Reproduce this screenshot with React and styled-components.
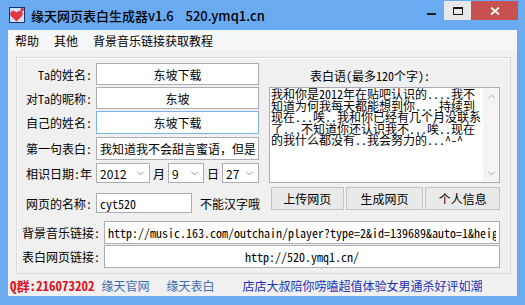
import React from "react";
import styled, { createGlobalStyle } from "styled-components";
import { ChevronDown, ChevronUp } from "lucide-react";

const SANS = `"Noto Sans CJK SC", "Noto Sans", sans-serif`;
const SONG = `"Noto Sans Mono CJK SC", "Noto Sans CJK SC", "Liberation Mono", monospace`;

const GlobalStyle = createGlobalStyle`
	html, body {
		margin: 0;
		padding: 0;
		overflow: hidden;
	}
	body {
		font-family: ${SANS};
		font-size: 12px;
		color: #000;
	}
`;

const Window = styled.div`
	width: 525px;
	height: 305px;
	background: #69aaf0;
	display: flex;
	flex-direction: column;
`;

const TitleBar = styled.div`
	height: 30px;
	flex-shrink: 0;
	display: flex;
	align-items: flex-start;
`;

const TitleLeft = styled.div`
	height: 30px;
	display: flex;
	align-items: center;
	gap: 6px;
	padding-left: 9px;
`;

const TitleText = styled.span`
	font-size: 13px;
	font-weight: 500;
	white-space: pre;
	color: #000;
`;

const Controls = styled.div`
	margin-left: auto;
	margin-right: 7px;
	margin-top: 1px;
	height: 19px;
	display: flex;
`;

const CtrlButton = styled.div`
	width: ${p => p.$w}px;
	height: 19px;
	display: flex;
	align-items: center;
	justify-content: center;
	background: ${p => p.$bg || "transparent"};
`;

const Client = styled.div`
	margin: 0 8px;
	height: 266px;
	background: #f0f0f0;
	display: flex;
	flex-direction: column;
`;

const MenuBar = styled.div`
	height: 20px;
	background: #f5f6f7;
	display: flex;
	align-items: center;
	gap: 15px;
	padding-left: 7px;
	font-size: 12px;
`;

const Panel = styled.div`
	margin: 7px 0 0 8px;
	width: 495px;
	height: 217px;
	box-sizing: border-box;
	border: 1px solid #d9d9d9;
	box-shadow: inset 1px 1px 0 #fff;
	padding-top: 5px;
	display: flex;
	flex-direction: column;
`;

const Upper = styled.div`
	display: flex;
`;

const LeftCol = styled.div`
	width: 242px;
	display: flex;
	flex-direction: column;
`;

const RightCol = styled.div`
	width: 231px;
	margin-left: 10px;
	display: flex;
	flex-direction: column;
`;

const FieldRow = styled.div`
	display: flex;
	align-items: center;
	gap: 4px;
	height: ${p => p.$h}px;
	margin-top: ${p => p.$mt || 0}px;
`;

const Label = styled.span`
	width: ${p => p.$w || 75}px;
	flex-shrink: 0;
	text-align: right;
	font-family: ${SONG};
	font-size: 12px;
	white-space: nowrap;
`;

const TextBox = styled.input`
	box-sizing: border-box;
	width: ${p => p.$w}px;
	height: 100%;
	margin: 0;
	padding: 0 3px;
	border: 1px solid ${p => (p.$focus ? "#7eb4ea" : "#abadb3")};
	background: #fff;
	outline: none;
	font-family: ${p => (p.$mono ? SONG : SANS)};
	font-size: 12px;
	color: #000;
	text-align: ${p => p.$align || "left"};
`;

const DateRow = styled.div`
	display: flex;
	align-items: center;
	height: 20px;
	margin-top: 3px;
`;

const Unit = styled.span`
	font-size: 12px;
	margin: 0 3px;
`;

const Select = styled.div`
	box-sizing: border-box;
	width: ${p => p.$w}px;
	height: 100%;
	margin-left: ${p => p.$ml || 0}px;
	border: 1px solid #abadb3;
	background: #fff;
	display: flex;
	align-items: center;
	justify-content: space-between;
	padding: 0 3px;
	font-family: ${SANS};
	font-size: 12px;
	color: #8a8a8a;
	span {
		color: #000;
	}
`;

const Hint = styled.span`
	margin-left: 4px;
	font-size: 12px;
	white-space: nowrap;
`;

const Caption = styled.div`
	height: 24px;
	padding-left: 41px;
	display: flex;
	align-items: center;
	font-family: ${SONG};
	font-size: 12px;
	white-space: nowrap;
`;

const Memo = styled.div`
	box-sizing: border-box;
	height: 96px;
	border: 1px solid #abadb3;
	background: #fff;
	display: flex;
`;

const MemoText = styled.div`
	flex: 1;
	min-width: 0;
	padding-left: 1px;
	font-family: ${SONG};
	font-size: 12px;
	line-height: 11.6px;
	white-space: pre;
`;

const ScrollBar = styled.div`
	width: 16px;
	flex-shrink: 0;
	background: #f4f4f4;
	display: flex;
	flex-direction: column;
	justify-content: space-between;
	color: #a6a6a6;
`;

const ScrollArrow = styled.div`
	height: 17px;
	display: flex;
	align-items: center;
	justify-content: center;
`;

const ButtonRow = styled.div`
	display: flex;
	gap: 2px;
	margin-top: 4px;
	padding-left: 2px;
`;

const ActionButton = styled.button`
	width: ${p => p.$w}px;
	height: 23px;
	margin: 0;
	padding: 0;
	border: 1px solid #c3c3c3;
	background: #e9e9e9;
	font-family: ${SANS};
	font-size: 12px;
	color: #000;
`;

const LinkRow = styled.div`
	height: 22px;
	display: flex;
	align-items: center;
	padding-left: 2px;
	white-space: nowrap;
`;

const QGroup = styled.span`
	color: #e0141e;
	font-family: ${SONG};
	font-weight: bold;
	font-size: 13px;
`;

const Link = styled.span`
	margin-left: ${p => p.$ml}px;
	color: ${p => p.$color};
	font-size: 12px;
`;

const AppIcon = () => (
	<svg width="16" height="16" viewBox="0 0 16 16">
		<rect x="0.5" y="0.5" width="15" height="15" fill="#cfe1f5" stroke="#1c3364" />
		<path
			d="M7.5 14.5 L2 9 C0.3 7.2 1.4 3.6 4.3 3.7 C5.8 3.8 6.8 4.8 7.5 5.8 C8.2 4.8 9.2 3.8 10.7 3.7 C13.6 3.6 14.7 7.2 13 9 Z"
			fill="#e2353d"
		/>
		<circle cx="13.2" cy="2.6" r="1.7" fill="#e01c24" />
	</svg>
);

const memoLines = [
	"我和你是2012年在贴吧认识的....我不",
	"知道为何我每天都能想到你....持续到",
	"现在...唉..我和你已经有几个月没联系",
	"了...不知道你还认识我不...唉..现在",
	"的我什么都没有..我会努力的...^-^"
].join("\n");

const App = () => {
	return (
		<>
			<GlobalStyle />
			<Window>
				<TitleBar>
					<TitleLeft>
						<AppIcon />
						<TitleText>缘天网页表白生成器v1.6    520.ymq1.cn</TitleText>
					</TitleLeft>
					<Controls>
						<CtrlButton $w={26}>
							<svg width="9" height="2" viewBox="0 0 9 2" style={{ marginTop: 6 }}>
								<rect width="9" height="2" fill="#1a1a1a" />
							</svg>
						</CtrlButton>
						<CtrlButton $w={27} $bg="#e8e8e8">
							<svg width="10" height="8" viewBox="0 0 10 8">
								<rect x="0.5" y="0.5" width="9" height="7" fill="none" stroke="#1a1a1a" />
								<rect x="0" y="0" width="10" height="2" fill="#1a1a1a" />
							</svg>
						</CtrlButton>
						<CtrlButton $w={47} $bg="#c75050">
							<svg width="10" height="8" viewBox="0 0 10 8">
								<path d="M1 0.5 L9 7.5 M9 0.5 L1 7.5" stroke="#fff" strokeWidth="1.8" />
							</svg>
						</CtrlButton>
					</Controls>
				</TitleBar>

				<Client>
					<MenuBar>
						<span>帮助</span>
						<span>其他</span>
						<span>背景音乐链接获取教程</span>
					</MenuBar>

					<Panel>
						<Upper>
							<LeftCol>
								<FieldRow $h={22}>
									<Label>Ta的姓名:</Label>
									<TextBox $w={163} $align="center" defaultValue="东坡下载" />
								</FieldRow>
								<FieldRow $h={22} $mt={2}>
									<Label>对Ta的昵称:</Label>
									<TextBox $w={163} $align="center" defaultValue="东坡" />
								</FieldRow>
								<FieldRow $h={23} $mt={2}>
									<Label>自己的姓名:</Label>
									<TextBox $w={163} $align="center" $focus defaultValue="东坡下载" />
								</FieldRow>
								<FieldRow $h={23} $mt={3}>
									<Label>第一句表白:</Label>
									<TextBox $w={163} defaultValue="我知道我不会甜言蜜语，但是我" />
								</FieldRow>
								<DateRow>
									<Label>相识日期:年</Label>
									<Select $w={54} $ml={4}>
										<span>2012</span>
										<ChevronDown size={11} strokeWidth={2} />
									</Select>
									<Unit>月</Unit>
									<Select $w={36}>
										<span>9</span>
										<ChevronDown size={11} strokeWidth={2} />
									</Select>
									<Unit>日</Unit>
									<Select $w={37}>
										<span>27</span>
										<ChevronDown size={11} strokeWidth={2} />
									</Select>
								</DateRow>
								<FieldRow $h={20} $mt={10}>
									<Label>网页的名称:</Label>
									<TextBox $w={96} $mono defaultValue="cyt520" />
									<Hint>不能汉字哦</Hint>
								</FieldRow>
							</LeftCol>

							<RightCol>
								<Caption>表白语(最多120个字):</Caption>
								<Memo>
									<MemoText>{memoLines}</MemoText>
									<ScrollBar>
										<ScrollArrow>
											<ChevronUp size={11} strokeWidth={2} />
										</ScrollArrow>
										<ScrollArrow>
											<ChevronDown size={11} strokeWidth={2} />
										</ScrollArrow>
									</ScrollBar>
								</Memo>
								<ButtonRow>
									<ActionButton $w={73}>上传网页</ActionButton>
									<ActionButton $w={78}>生成网页</ActionButton>
									<ActionButton $w={75}>个人信息</ActionButton>
								</ButtonRow>
							</RightCol>
						</Upper>

						<FieldRow $h={23} $mt={8}>
							<Label $w={83}>背景音乐链接:</Label>
							<TextBox
								$w={396}
								$mono
								defaultValue="http://music.163.com/outchain/player?type=2&id=139689&auto=1&height=66"
							/>
						</FieldRow>
						<FieldRow $h={23} $mt={1}>
							<Label $w={83}>表白网页链接:</Label>
							<TextBox $w={396} $mono $align="center" defaultValue="http://520.ymq1.cn/" />
						</FieldRow>
					</Panel>

					<LinkRow>
						<QGroup>Q群:216073202</QGroup>
						<Link $ml={7} $color="#3f6db5">缘天官网</Link>
						<Link $ml={17} $color="#3f6db5">缘天表白</Link>
						<Link $ml={28} $color="#1c2fb8">店店大叔陪你唠嗑超值体验女男通杀好评如潮</Link>
					</LinkRow>
				</Client>
			</Window>
		</>
	);
};

export default App;
